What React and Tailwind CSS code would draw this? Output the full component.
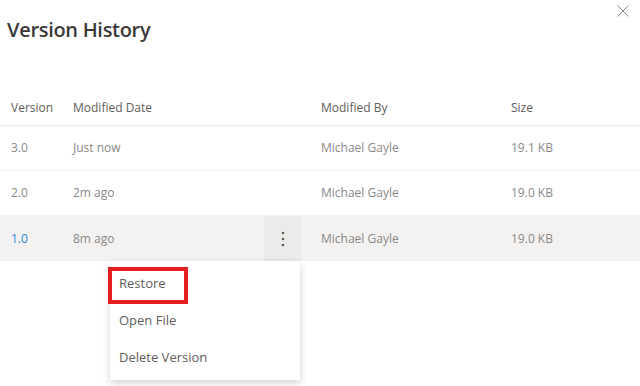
import React from "react";

const rows = [
  { v: "3.0", date: "Just now", by: "Michael Gayle", size: "19.1 KB" },
  { v: "2.0", date: "2m ago", by: "Michael Gayle", size: "19.0 KB" },
  { v: "1.0", date: "8m ago", by: "Michael Gayle", size: "19.0 KB", active: true },
];

export default function App() {
  return (
    <div
      className="relative w-[640px] h-[386px] bg-white overflow-hidden"
      style={{ fontFamily: '"Open Sans", "Noto Sans", sans-serif' }}
    >
      <div className="flex justify-between items-start h-[89px]">
        <h1 className="pl-[7px] pt-[16px] text-[20px] leading-[28px] font-semibold text-[#3b3a39] tracking-[-0.3px]">
          Version History
        </h1>
        <button className="mr-[11px] mt-[4px] w-[13px] h-[13px] flex items-center justify-center">
          <svg width="12" height="12" viewBox="0 0 12 12" fill="none" stroke="#8a8886" strokeWidth="1">
            <path d="M0.5 0.5 L11.5 11.5 M11.5 0.5 L0.5 11.5" />
          </svg>
        </button>
      </div>

      <div className="flex items-center h-[37px] pt-[1px] border-b border-[#edebe9] text-[12px] text-[#605e5c]">
        <div className="w-[73px] pl-[11px]">Version</div>
        <div className="w-[248px]">Modified Date</div>
        <div className="w-[190px]">Modified By</div>
        <div>Size</div>
      </div>

      {rows.map((r, i) => (
        <div
          key={i}
          className={
            "flex items-center h-[45px] text-[12px] text-[#8a8886] " +
            (r.active ? "bg-[#f3f2f1]" : "border-b border-[#f3f2f1]")
          }
        >
          <div className={"w-[73px] pl-[11px] " + (r.active ? "text-[#2b88d8]" : "")}>{r.v}</div>
          <div className="w-[191px]">{r.date}</div>
          <div className={"w-[37px] h-full flex items-center justify-center " + (r.active ? "bg-[#edebe9]" : "")}>
            {r.active && (
              <svg width="4" height="16" viewBox="0 0 4 16" fill="#605e5c">
                <circle cx="2" cy="2" r="1.3" />
                <circle cx="2" cy="8" r="1.3" />
                <circle cx="2" cy="14" r="1.3" />
              </svg>
            )}
          </div>
          <div className="w-[20px]" />
          <div className="w-[190px]">{r.by}</div>
          <div>{r.size}</div>
        </div>
      ))}

      <div className="absolute left-[110px] top-[261px] w-[190px] bg-white shadow-[0_3px_8px_rgba(0,0,0,0.18)] py-[4px] text-[13px] text-[#605e5c]">
        <div className="relative h-[37px] flex items-center pl-[9px]">
          Restore
          <div className="absolute left-[-2px] top-[2px] w-[80px] h-[37px] border-[4px] border-[#e81e25]" />
        </div>
        <div className="h-[37px] flex items-center pl-[9px]">Open File</div>
        <div className="h-[37px] flex items-center pl-[9px]">Delete Version</div>
      </div>
    </div>
  );
}
